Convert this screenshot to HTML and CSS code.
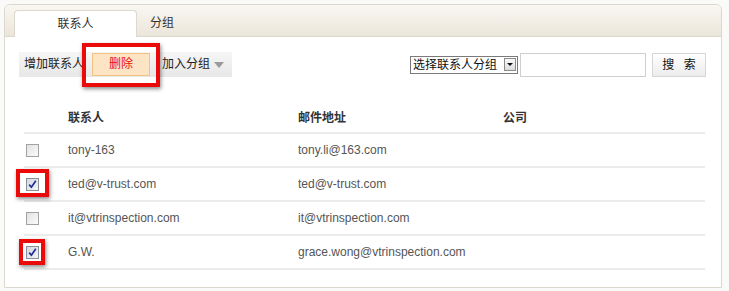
FILE: index.html
```html
<!DOCTYPE html>
<html lang="zh-CN">
<head>
    <meta charset="UTF-8">
    <meta name="viewport" content="width=device-width, initial-scale=1.0">
    <title>联系人</title>
    <link rel="stylesheet" href="styles.css">
</head>
<body>
    <div class="panel">
        <div class="tabs">
            <span class="tab active">联系人</span>
            <span class="tab">分组</span>
        </div>

        <div class="toolbar">
            <div class="btn-group">
                <span class="btn">增加联系人</span>
                <span class="btn btn-del">删除<i class="mark mark-del"></i></span>
                <span class="btn btn-menu">加入分组<span class="caret"></span></span>
            </div>
            <div class="search">
                <span class="select">选择联系人分组<span class="select-arrow"><span class="caret-sm"></span></span></span>
                <input class="search-input" type="text">
                <span class="btn-search">搜 索</span>
            </div>
        </div>

        <table class="contacts">
            <thead>
                <tr>
                    <th class="col-check"></th>
                    <th class="col-name">联系人</th>
                    <th class="col-mail">邮件地址</th>
                    <th>公司</th>
                </tr>
            </thead>
            <tbody>
                <tr>
                    <td><span class="cb"></span></td>
                    <td>tony-163</td>
                    <td>tony.li@163.com</td>
                    <td></td>
                </tr>
                <tr>
                    <td>
                        <span class="cb checked">
                            <svg viewBox="0 0 13 13" width="13" height="13"><path d="M3.2 6.6 L5.4 9.2 L9.8 2.8" fill="none" stroke="#1e2e96" stroke-width="1.7"/></svg>
                            <i class="mark mark-a"></i>
                        </span>
                    </td>
                    <td>ted@v-trust.com</td>
                    <td>ted@v-trust.com</td>
                    <td></td>
                </tr>
                <tr>
                    <td><span class="cb"></span></td>
                    <td>it@vtrinspection.com</td>
                    <td>it@vtrinspection.com</td>
                    <td></td>
                </tr>
                <tr>
                    <td>
                        <span class="cb checked">
                            <svg viewBox="0 0 13 13" width="13" height="13"><path d="M3.2 6.6 L5.4 9.2 L9.8 2.8" fill="none" stroke="#1e2e96" stroke-width="1.7"/></svg>
                            <i class="mark mark-b"></i>
                        </span>
                    </td>
                    <td>G.W.</td>
                    <td>grace.wong@vtrinspection.com</td>
                    <td></td>
                </tr>
            </tbody>
        </table>
    </div>
</body>
</html>
```

FILE: styles.css
```css
body {
    margin: 0;
    padding: 0;
    background-color: #fafaf8;
    font-family: "Liberation Sans", "Noto Sans CJK SC", sans-serif;
    font-size: 12px;
    color: #333;
}

.panel {
    box-sizing: border-box;
    height: 284px;
    margin: 4px 7px 0 4px;
    border: 1px solid #dcd8ce;
    border-radius: 6px 6px 0 0;
    background-color: white;
}

/* cabecera con pestañas */
.tabs {
    display: flex;
    align-items: flex-end;
    height: 31px;
    padding-left: 9px;
    border-bottom: 1px solid #dcd8ce;
    border-radius: 5px 5px 0 0;
    background: linear-gradient(#f9f7f2, #ebe6da);
}

.tab {
    box-sizing: border-box;
    height: 27px;
    line-height: 26px;
    padding: 0 13px;
    margin-bottom: -1px;
    color: #333;
}

.tab.active {
    width: 123px;
    text-align: center;
    background-color: white;
    border: 1px solid #dcd8ce;
    border-bottom: none;
    border-radius: 4px 4px 0 0;
}

/* barra de botones */
.toolbar {
    display: flex;
    justify-content: space-between;
    align-items: center;
    padding: 15px 15px 0 14px;
}

.btn-group {
    display: flex;
    align-items: center;
    height: 25px;
    background: linear-gradient(#f6f6f6, #e7e7e7);
}

.btn {
    position: relative;
    padding: 0 4px 0 5px;
    line-height: 25px;
    color: #222;
}

.btn-del {
    box-sizing: border-box;
    width: 58px;
    height: 23px;
    line-height: 21px;
    margin-left: 4px;
    padding: 0;
    text-align: center;
    color: #e81010;
    background-color: #fde4c4;
    border: 1px solid #f2c27e;
}

.btn-menu {
    display: flex;
    align-items: center;
    padding: 0 8px 0 12px;
}

.caret {
    width: 0;
    height: 0;
    margin-left: 4px;
    border-left: 5px solid transparent;
    border-right: 5px solid transparent;
    border-top: 6px solid #9a9a9a;
}

/* marcas rojas */
.mark {
    position: absolute;
    border: 4px solid #ea0a0a;
    box-shadow: 1px 2px 4px rgba(0, 0, 0, 0.45);
}

.mark-del {
    top: -11px;
    left: -11px;
    right: -11px;
    bottom: -12px;
}

.mark-a {
    top: -10px;
    left: -11px;
    right: -11px;
    bottom: -7px;
}

.mark-b {
    top: -8px;
    left: -8px;
    right: -7px;
    bottom: -7px;
}

/* búsqueda */
.search {
    display: flex;
    align-items: center;
}

.select {
    display: flex;
    align-items: center;
    box-sizing: border-box;
    width: 108px;
    height: 18px;
    padding: 0 1px 0 2px;
    border: 1px solid #7a7a7a;
    color: #111;
    line-height: 16px;
    white-space: nowrap;
}

.select-arrow {
    display: flex;
    align-items: center;
    justify-content: center;
    box-sizing: border-box;
    width: 12px;
    height: 13px;
    margin-left: auto;
    border: 1px solid #8a8a8a;
    background: linear-gradient(#fafafa, #dcdcdc);
}

.caret-sm {
    width: 0;
    height: 0;
    border-left: 3px solid transparent;
    border-right: 3px solid transparent;
    border-top: 3px solid #111;
}

.search-input {
    box-sizing: border-box;
    width: 126px;
    height: 24px;
    margin: 0 6px 0 2px;
    border: 1px solid #cfcfcf;
    padding: 0 4px;
}

.btn-search {
    box-sizing: border-box;
    width: 54px;
    height: 24px;
    line-height: 22px;
    text-align: center;
    border: 1px solid #d6d6d6;
    background: linear-gradient(#ffffff, #ececec);
    color: #111;
    letter-spacing: 3px;
    text-indent: 3px;
}

/* tabla de contactos */
.contacts {
    width: 681px;
    margin: 23px 0 0 19px;
    border-collapse: collapse;
    table-layout: fixed;
}

.contacts th,
.contacts td {
    height: 32px;
    padding: 0 0 0 8px;
    border-bottom: 2px solid #ececec;
    text-align: left;
    vertical-align: middle;
}

.contacts th {
    font-weight: bold;
    color: #333;
}

.contacts td {
    color: #555;
}

.contacts th.col-check,
.contacts td:first-child {
    padding-left: 2px;
}

.col-check {
    width: 34px;
}

.col-name {
    width: 222px;
}

.col-mail {
    width: 197px;
}

.cb {
    position: relative;
    display: inline-block;
    vertical-align: middle;
    box-sizing: border-box;
    width: 13px;
    height: 13px;
    border: 1px solid #a2a2a2;
    background: linear-gradient(135deg, #e2e2e2, #fbfbfb);
}

.cb svg {
    position: absolute;
    top: -1px;
    left: -1px;
}

.cb.checked {
    border-color: #8a8f9c;
    background: linear-gradient(135deg, #d5d8e0, #f4f4f6);
}
```
